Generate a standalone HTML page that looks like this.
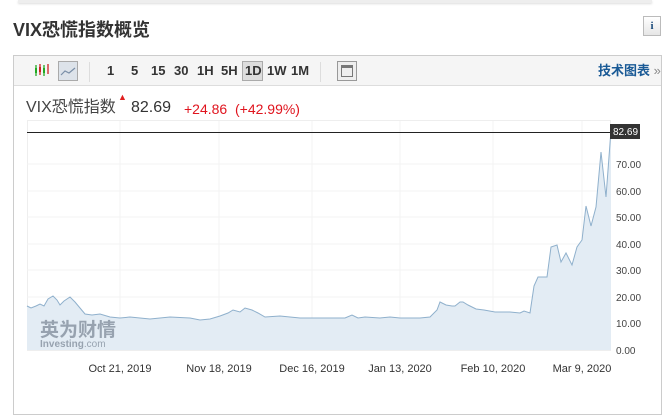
<!DOCTYPE html>
<html><head><meta charset="utf-8"><style>
body{margin:0;width:672px;height:402px;background:#fff;font-family:"Liberation Sans","Noto Sans CJK SC",sans-serif;position:relative;overflow:hidden}
.a{position:absolute;line-height:1.2}
.tb{font-weight:bold;font-size:13px;color:#333;top:63px}
</style></head><body>
<div class="a" style="left:18px;top:0;width:634px;height:3px;background:#eee;box-shadow:0 1px 2px #ddd"></div>
<div class="a" style="left:13px;top:18px;font-size:18px;font-weight:bold;color:#333;line-height:24px">VIX恐慌指数概览</div>
<div class="a" style="left:643px;top:16px;width:18px;height:20px;border:1px solid #bbb;background:linear-gradient(#fff,#e6e6e6);box-sizing:border-box;text-align:center;font:bold 11px 'Liberation Serif',serif;color:#1a4a7a;line-height:18px">i</div>
<div class="a" style="left:13px;top:55px;width:649px;height:360px;border:1px solid #ccc;box-sizing:border-box"></div>
<div class="a" style="left:14px;top:56px;width:647px;height:29px;background:#f5f5f5;border-bottom:1px solid #ddd"></div>
<svg class="a" style="left:34px;top:62px" width="16" height="16"><g stroke-width="1.3"><line x1="2" y1="3" x2="2" y2="14" stroke="#2a2"/><rect x="1" y="6" width="2" height="5" fill="#2a2"/><line x1="6" y1="2" x2="6" y2="13" stroke="#c22"/><rect x="5" y="5" width="2" height="5" fill="#c22"/><line x1="10" y1="3" x2="10" y2="14" stroke="#2a2"/><rect x="9" y="6" width="2" height="5" fill="#2a2"/><line x1="14" y1="2" x2="14" y2="12" stroke="#c22"/></g></svg>
<div class="a" style="left:58px;top:61px;width:20px;height:20px;border:1px solid #aaa;background:#dde3ea;box-sizing:border-box"></div>
<svg class="a" style="left:60px;top:63px" width="16" height="16"><polyline points="1,12 5,8 9,10 15,5" fill="none" stroke="#7a8fa8" stroke-width="1.2"/></svg>
<div class="a" style="left:89px;top:62px;width:1px;height:20px;background:#ddd"></div>
<div class="a tb" style="left:107px">1</div>
<div class="a tb" style="left:131px">5</div>
<div class="a tb" style="left:151px">15</div>
<div class="a tb" style="left:174px">30</div>
<div class="a tb" style="left:197px">1H</div>
<div class="a tb" style="left:221px">5H</div>
<div class="a" style="left:242px;top:61px;width:21px;height:20px;border:1px solid #aaa;background:#ddd;box-sizing:border-box"></div>
<div class="a tb" style="left:245px">1D</div>
<div class="a tb" style="left:267px">1W</div>
<div class="a tb" style="left:291px">1M</div>
<div class="a" style="left:320px;top:62px;width:1px;height:20px;background:#ddd"></div>
<div class="a" style="left:337px;top:61px;width:20px;height:20px;border:1px solid #999;background:#eee;box-sizing:border-box"></div>
<div class="a" style="left:341px;top:65px;width:12px;height:12px;border:1px solid #777;box-sizing:border-box;border-top:3px solid #777"></div>
<div class="a" style="left:598px;top:63px;font-size:13px;font-weight:bold;color:#1a5a96;line-height:16px">技术图表 <span style="color:#888;font-weight:normal">»</span></div>
<div class="a" style="left:26px;top:98px;font-size:16px;color:#444;line-height:20px">VIX恐慌指数</div>
<div class="a" style="left:118px;top:92px;color:#e02020;font-size:9px">▲</div>
<div class="a" style="left:131px;top:98px;font-size:16px;color:#333;line-height:20px">82.69</div>
<div class="a" style="left:184px;top:100px;font-size:14px;color:#e0141e;line-height:18px">+24.86 &nbsp;(+42.99%)</div>
<svg class="a" style="left:0;top:0" width="672" height="402">
<rect x="27.5" y="120.5" width="583" height="230" fill="none" stroke="#eee"/>
<g stroke="#f3f3f3"><line x1="120" y1="121" x2="120" y2="350"/><line x1="219" y1="121" x2="219" y2="350"/><line x1="312" y1="121" x2="312" y2="350"/><line x1="400" y1="121" x2="400" y2="350"/><line x1="493" y1="121" x2="493" y2="350"/><line x1="582" y1="121" x2="582" y2="350"/>
<line x1="27" y1="164" x2="610" y2="164"/><line x1="27" y1="191" x2="610" y2="191"/><line x1="27" y1="217" x2="610" y2="217"/><line x1="27" y1="244" x2="610" y2="244"/><line x1="27" y1="270" x2="610" y2="270"/><line x1="27" y1="297" x2="610" y2="297"/><line x1="27" y1="323" x2="610" y2="323"/></g>
<polygon fill="#e3ecf4" points="27,350 27,306 31,308 36,306 40,304 44,306 48,299 53,296 57,300 60,305 64,301 70,297 75,302 80,308 85,314 92,315 100,314 110,317 120,318 130,317 150,319 170,317 190,318 200,320 210,319 220,316 228,313 233,310 240,312 245,308 252,310 258,313 265,317 280,316 300,318 327,318 345,318 352,315 358,318 365,317 380,318 390,317 400,318 420,318 430,317 437,310 440,302 446,305 452,306 455,306 460,302 463,302 468,305 476,309 484,310 495,312 510,312 520,313 524,311 530,313 534,286 538,277 547,277 551,247 557,245 561,262 566,253 572,265 577,247 582,240 586,206 591,226 596,207 601,152 606,197 611,130 611,350"/>
<polyline fill="none" stroke="#8fb0cc" stroke-width="1" points="27,306 31,308 36,306 40,304 44,306 48,299 53,296 57,300 60,305 64,301 70,297 75,302 80,308 85,314 92,315 100,314 110,317 120,318 130,317 150,319 170,317 190,318 200,320 210,319 220,316 228,313 233,310 240,312 245,308 252,310 258,313 265,317 280,316 300,318 327,318 345,318 352,315 358,318 365,317 380,318 390,317 400,318 420,318 430,317 437,310 440,302 446,305 452,306 455,306 460,302 463,302 468,305 476,309 484,310 495,312 510,312 520,313 524,311 530,313 534,286 538,277 547,277 551,247 557,245 561,262 566,253 572,265 577,247 582,240 586,206 591,226 596,207 601,152 606,197 611,130"/>
<line x1="27" y1="132.5" x2="610" y2="132.5" stroke="#222"/>
<rect x="610" y="124" width="30" height="15" fill="#333"/>
<text x="613" y="135" font-size="10" fill="#fff" font-family="Liberation Sans">82.69</text>
<g font-size="10" fill="#444" font-family="Liberation Sans"><text x="616" y="168">70.00</text><text x="616" y="195">60.00</text><text x="616" y="221">50.00</text><text x="616" y="248">40.00</text><text x="616" y="274">30.00</text><text x="616" y="301">20.00</text><text x="616" y="327">10.00</text><text x="616" y="354">0.00</text></g>
<g font-size="11" fill="#333" font-family="Liberation Sans" text-anchor="middle"><text x="120" y="372">Oct 21, 2019</text><text x="219" y="372">Nov 18, 2019</text><text x="312" y="372">Dec 16, 2019</text><text x="400" y="372">Jan 13, 2020</text><text x="493" y="372">Feb 10, 2020</text><text x="582" y="372">Mar 9, 2020</text></g>
<text x="40" y="336" font-size="19" font-weight="bold" fill="#8a96a4" font-family="Noto Sans CJK SC,sans-serif" opacity="0.85">英为财情</text>
<text x="40" y="347" font-size="10" font-weight="bold" fill="#8a96a4" font-family="Liberation Sans" opacity="0.85">Investing<tspan font-weight="normal">.com</tspan></text>
</svg>
</body></html>
